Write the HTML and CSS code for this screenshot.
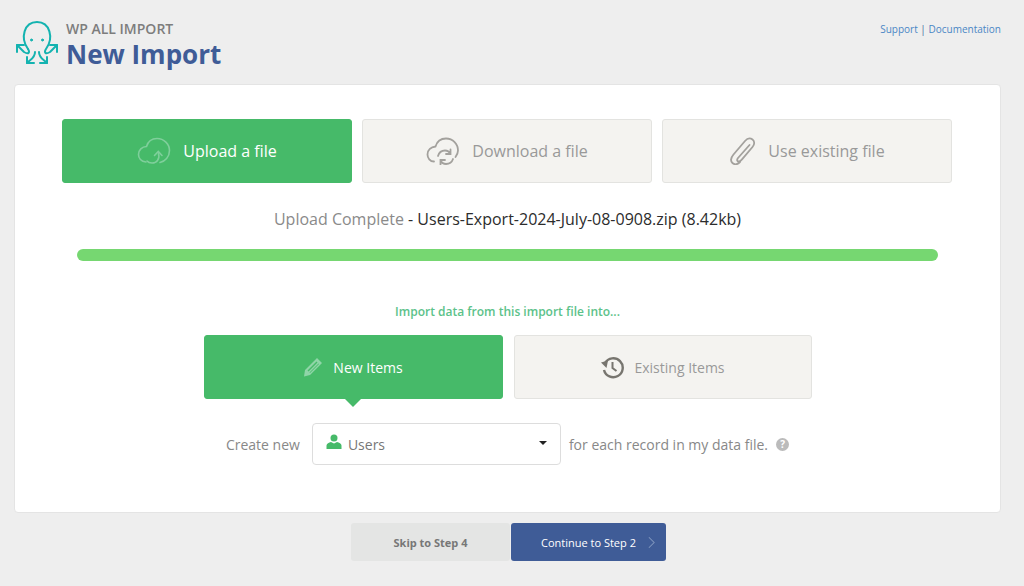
FILE: index.html
```html
<!DOCTYPE html>
<html lang="en">
<head>
    <meta charset="UTF-8">
    <meta name="viewport" content="width=device-width, initial-scale=1.0">
    <title>New Import</title>
    <link rel="stylesheet" href="styles.css">
</head>
<body>
    <header class="page-header">
        <svg class="logo" viewBox="0 0 48 48" fill="none" stroke="#14b3b0" stroke-width="2" stroke-linecap="round" stroke-linejoin="round">
            <path d="M14 29C6 18 10 2 23 2C36 2 40 18 32 29C30 32 31 35 36 32L43 25"/>
            <path d="M14 29C16 32 15 35 10 32L3 25"/>
            <path d="M3 32V25H10M43 32V25H36"/>
            <path d="M21 32C21 38 17 39 13 43M25 32C25 38 29 39 33 43"/>
            <path d="M13 37V43H20M33 37V43H26"/>
            <circle cx="17.500" cy="20" r="1" fill="#14b3b0" stroke-width="1"/>
            <circle cx="28.500" cy="20" r="1" fill="#14b3b0" stroke-width="1"/>
        </svg>
        <div class="titles">
            <div class="brand">WP ALL IMPORT</div>
            <h1>New Import</h1>
        </div>
        <div class="help-links"><a href="#">Support</a> | <a href="#">Documentation</a></div>
    </header>

    <main class="card">
        <div class="tabs">
            <div class="tab active">
                <svg class="tab-icon" viewBox="0 0 34 28" fill="none" stroke="#7fcf9b" stroke-width="1.600" stroke-linecap="round">
                    <path d="M9 25C4 25 1.500 21 1.500 17.500C1.500 13 5 9.500 9.500 9.500C11 4.500 15 1.500 20 1.500C27 1.500 32.500 7 32.500 13.500C32.500 20 28 24.500 23 25.500"/>
                    <path d="M10 24C12 26.500 18 27 20.500 23.500C22 21.500 22.300 19 21.500 16.500"/>
                    <path d="M17.500 18.500L21.300 14.500L25 18.500"/>
                </svg>
                <span>Upload a file</span>
            </div>
            <div class="tab">
                <svg class="tab-icon" viewBox="0 0 34 28" fill="none" stroke="#a3a19d" stroke-width="1.800" stroke-linecap="round">
                    <path d="M8 24.500C4 24.500 1.500 21 1.500 17.500C1.500 13 5 10 9.500 9.500C11 4.500 15 1.500 20 1.500C27 1.500 32 7 32 13.500C32 16 31 18 29.500 20"/>
                    <path d="M12 19C13 15.500 16 13.500 19 13.500C21.500 13.500 23.500 15 24.500 17M24.500 12.500V17H20"/>
                    <path d="M27 22C26 25 23 27 20 27C17.500 27 15.500 25.500 14.500 23.500M14.500 27.500V23H19"/>
                </svg>
                <span>Download a file</span>
            </div>
            <div class="tab">
                <svg class="tab-icon clip" viewBox="0 0 26 28" fill="none" stroke="#a3a19d" stroke-width="1.800" stroke-linecap="round">
                    <path d="M20 8L8.500 21C7 22.800 7.700 24.500 9 24.500C10.500 24.500 11.500 23.500 12.500 22.300L23 10C25.500 7 25 4 23 2.500C21 1 18 1 15.500 4L4 17.500C1 21 1 24 3 26C5 27.800 8 27.500 10.500 25"/>
                </svg>
                <span>Use existing file</span>
            </div>
        </div>

        <p class="upload-status"><span class="status-label">Upload Complete</span> - Users-Export-2024-July-08-0908.zip (8.42kb)</p>
        <div class="progress"></div>

        <p class="import-hint">Import data from this import file into...</p>

        <div class="choices">
            <div class="choice active">
                <svg class="choice-icon" viewBox="0 0 20 20" fill="#8fd5a8">
                    <path d="M14 1L19 6L7 18L1 19.500L2 13ZM13.500 4.500L4.500 13.500L5.500 14.500L14.500 5.500ZM15.500 6.500L6.500 15.500L7 16L16 7Z" fill-rule="evenodd"/>
                </svg>
                <span>New Items</span>
            </div>
            <div class="choice">
                <svg class="choice-icon history" viewBox="0 0 24 24" fill="none" stroke="#77756f" stroke-width="2.400">
                    <path d="M5 8A9.500 9.500 0 1 1 4 15"/>
                    <path d="M1 7.500L6.500 13L8 5.500Z" fill="#77756f" stroke="none"/>
                    <path d="M12.500 7V13L16.500 16" stroke-width="2"/>
                </svg>
                <span>Existing Items</span>
            </div>
        </div>

        <div class="create-row">
            <span>Create new</span>
            <div class="select-box">
                <svg class="user-icon" viewBox="0 0 16 16" fill="#46ba69">
                    <circle cx="8" cy="4" r="3.500"/>
                    <path d="M0.500 15V11.500C0.500 9.500 3 8.500 5 8L8 9.500L11 8C13 8.500 15.500 9.500 15.500 11.500V15Z"/>
                </svg>
                <span class="select-value">Users</span>
                <i class="caret"></i>
            </div>
            <span>for each record in my data file.</span>
            <span class="help-dot">?</span>
        </div>
    </main>

    <footer class="actions">
        <button class="btn-skip" type="button">Skip to Step 4</button>
        <button class="btn-next" type="button">Continue to Step 2
            <svg class="chevron" viewBox="0 0 8 14" fill="none" stroke="#7f95bd" stroke-width="1.200"><path d="M1 1L7 7L1 13"/></svg>
        </button>
    </footer>
</body>
</html>
```

FILE: styles.css
```css
* {
    box-sizing: border-box;
}

body {
    font-family: "Open Sans", Arial, sans-serif;
    background-color: #eeeeee;
    margin: 0;
    padding: 0 23px 0 14px;
    color: #777;
    height: 586px;
    overflow: hidden;
}

.page-header {
    display: flex;
    align-items: flex-start;
    height: 84px;
    padding-top: 20px;
}

.logo {
    width: 48px;
    height: 48px;
    flex: none;
}

.titles {
    margin-left: 4px;
}

.brand {
    font-size: 14px;
    line-height: 18px;
    font-weight: 600;
    color: #7d7d7d;
}

h1 {
    margin: 0;
    font-size: 26px;
    line-height: 32px;
    font-weight: 700;
    color: #3f5c97;
}

.help-links {
    margin-left: auto;
    font-size: 10px;
    line-height: 18px;
    color: #46699c;
}

.help-links a {
    color: #4a86c5;
    text-decoration: none;
}

.card {
    height: 429px;
    background-color: #fff;
    border: 1px solid #e4e4e4;
    border-radius: 4px;
    padding: 34px 47px 0;
}

.tabs {
    display: flex;
    gap: 10px;
    margin-right: 1px;
}

.tab {
    display: flex;
    align-items: center;
    justify-content: center;
    gap: 12px;
    width: 290px;
    height: 64px;
    background-color: #f4f3f0;
    border: 1px solid #e3e3e0;
    border-radius: 3px;
    font-size: 16px;
    color: #999;
}

.tab.active {
    background-color: #46ba69;
    border-color: #46ba69;
    color: #fff;
}

.tab-icon {
    width: 34px;
    height: 28px;
}

.tab-icon.clip {
    width: 27px;
}

.upload-status {
    margin: 24px 0 0;
    text-align: center;
    font-size: 16px;
    line-height: 24px;
    color: #2c2c2c;
}

.status-label {
    color: #8a8a8a;
}

.progress {
    height: 12px;
    margin: 18px 15px 0;
    background-color: #76d771;
    border-radius: 6px;
}

.import-hint {
    margin: 42px 0 0;
    text-align: center;
    font-size: 12px;
    line-height: 18px;
    font-weight: 600;
    color: #5cc28a;
}

.choices {
    display: flex;
    justify-content: center;
    gap: 11px;
    margin-top: 14px;
}

.choice {
    position: relative;
    display: flex;
    align-items: center;
    justify-content: center;
    gap: 10px;
    width: 298px;
    height: 64px;
    background-color: #f4f3f0;
    border: 1px solid #e3e3e0;
    border-radius: 3px;
    font-size: 14px;
    color: #999;
}

.choice.active {
    width: 299px;
    background-color: #46ba69;
    border-color: #46ba69;
    color: #fff;
}

.choice.active::after {
    content: "";
    position: absolute;
    left: 50%;
    bottom: -9px;
    margin-left: -9px;
    border-style: solid;
    border-width: 9px 9px 0;
    border-color: #46ba69 transparent transparent;
}

.choice-icon {
    width: 20px;
    height: 20px;
}

.choice-icon.history {
    width: 24px;
    height: 24px;
}

.create-row {
    display: flex;
    align-items: center;
    justify-content: center;
    margin-top: 24px;
    font-size: 14px;
    color: #888;
}

.select-box {
    display: flex;
    align-items: center;
    width: 249px;
    height: 42px;
    margin: 0 8px 0 12px;
    padding: 0 13px;
    background-color: #fff;
    border: 1px solid #ddd;
    border-radius: 4px;
}

.user-icon {
    width: 16px;
    height: 16px;
    margin-top: -4px;
}

.select-value {
    margin-left: 6px;
    color: #777;
}

.caret {
    margin-left: auto;
    margin-top: -2px;
    border-style: solid;
    border-width: 4px 4px 0;
    border-color: #222 transparent transparent;
}

.help-dot {
    width: 13px;
    height: 13px;
    margin-left: 8px;
    border-radius: 50%;
    background-color: #bbb;
    color: #fff;
    font-size: 10px;
    line-height: 13px;
    font-weight: 700;
    text-align: center;
}

.actions {
    display: flex;
    justify-content: center;
    gap: 1px;
    margin-top: 10px;
    margin-left: 2px;
}

.actions button {
    height: 38px;
    border: none;
    border-radius: 3px;
    font-family: inherit;
    font-size: 11px;
    cursor: pointer;
}

.btn-skip {
    width: 159px;
    background-color: #e4e5e4;
    color: #777;
    font-weight: 700;
}

.btn-next {
    display: flex;
    align-items: center;
    width: 155px;
    padding: 0 0 0 30px;
    background-color: #3f5c97;
    color: #fff;
}

.chevron {
    width: 7px;
    height: 13px;
    margin-left: 12px;
}
```
